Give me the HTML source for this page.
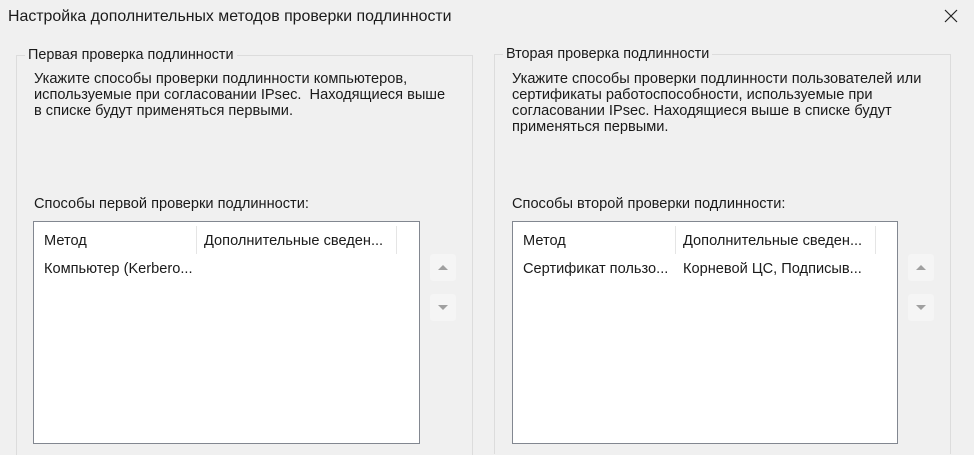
<!DOCTYPE html>
<html><head><meta charset="utf-8"><style>
*{margin:0;padding:0;box-sizing:border-box}
body{width:974px;height:448px;background:#f0f0f0;font-family:"Liberation Sans","DejaVu Sans",sans-serif;color:#1a1a1a;position:relative;overflow:hidden;font-size:14.6px}
.a{position:absolute;white-space:nowrap}
.gb{position:absolute;border:1px solid #dcdcdc;border-bottom:none}
.lg{position:absolute;background:#f0f0f0;padding:0 3px;font-size:14.4px;top:-10px;line-height:18px}
.lb{position:absolute;background:#fff;border:1px solid #828790}
.sep{position:absolute;top:4px;width:1px;height:28px;background:#e5e5e5}
.btn{position:absolute;width:26px;height:27px;background:#f5f5f5;border-radius:3px}
.btn svg{position:absolute;left:7px;top:10px}
</style></head><body>
<div class="a" style="left:8px;top:8px;font-size:15.9px">Настройка дополнительных методов проверки подлинности</div>
<svg class="a" style="left:944px;top:9px" width="14" height="14"><path d="M1 1L13 13M13 1L1 13" stroke="#222" stroke-width="1.2"/></svg>

<div class="gb" style="left:16px;top:55px;width:457px;height:400px"><div class="lg" style="left:8px">Первая проверка подлинности</div></div>
<div class="a" style="left:34px;top:71px;line-height:16px">Укажите способы проверки подлинности компьютеров,<br>используемые при согласовании IPsec.&nbsp; Находящиеся выше<br>в списке будут применяться первыми.</div>
<div class="a" style="left:34px;top:196px">Способы первой проверки подлинности:</div>
<div class="lb" style="left:33px;top:221px;width:387px;height:223px">
<div class="a" style="left:10px;top:11px">Метод</div>
<div class="sep" style="left:162px"></div>
<div class="a" style="left:170px;top:11px">Дополнительные сведен...</div>
<div class="sep" style="left:362px"></div>
<div class="a" style="left:10px;top:39px">Компьютер (Kerbero...</div>
</div>
<div class="btn" style="left:430px;top:254px"><svg width="12" height="7"><path d="M1 6L6 1L11 6Z" fill="#a0a0a0"/></svg></div>
<div class="btn" style="left:430px;top:294px"><svg width="12" height="7"><path d="M1 1L6 6L11 1Z" fill="#a0a0a0"/></svg></div>

<div class="gb" style="left:494px;top:54px;width:457px;height:400px"><div class="lg" style="left:8px">Вторая проверка подлинности</div></div>
<div class="a" style="left:512px;top:71px;line-height:16px">Укажите способы проверки подлинности пользователей или<br>сертификаты работоспособности, используемые при<br>согласовании IPsec. Находящиеся выше в списке будут<br>применяться первыми.</div>
<div class="a" style="left:512px;top:196px">Способы второй проверки подлинности:</div>
<div class="lb" style="left:512px;top:221px;width:386px;height:223px">
<div class="a" style="left:10px;top:11px">Метод</div>
<div class="sep" style="left:162px"></div>
<div class="a" style="left:170px;top:11px">Дополнительные сведен...</div>
<div class="sep" style="left:362px"></div>
<div class="a" style="left:10px;top:39px">Сертификат пользо...</div>
<div class="a" style="left:170px;top:39px">Корневой ЦС, Подписыв...</div>
</div>
<div class="btn" style="left:908px;top:254px"><svg width="12" height="7"><path d="M1 6L6 1L11 6Z" fill="#a0a0a0"/></svg></div>
<div class="btn" style="left:908px;top:294px"><svg width="12" height="7"><path d="M1 1L6 6L11 1Z" fill="#a0a0a0"/></svg></div>
</body></html>
